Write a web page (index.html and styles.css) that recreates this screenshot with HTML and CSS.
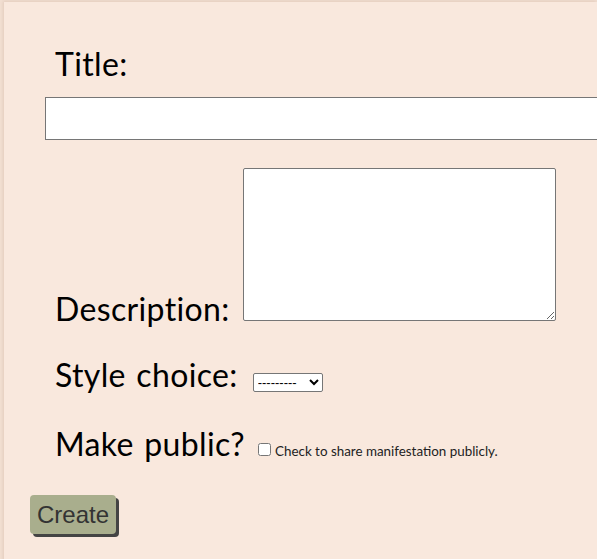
FILE: index.html
```html
<!DOCTYPE html>
<html>
<head>
<meta charset="utf-8">
<link rel="stylesheet" href="styles.css">
</head>
<body>
<div class="card">
  <form class="form">
    <div class="row row-title">
      <label class="label" for="title">Title:</label>
    </div>
    <input class="text-input" id="title" type="text">
    <div class="row row-desc">
      <label class="label" for="desc">Description:</label>
      <textarea class="textarea" id="desc"></textarea>
    </div>
    <div class="row row-style">
      <label class="label" for="style">Style choice:</label>
      <select class="select" id="style"><option>---------</option></select>
    </div>
    <div class="row row-public">
      <label class="label" for="pub">Make public?</label>
      <input class="checkbox" id="pub" type="checkbox">
      <span class="help">Check to share manifestation publicly.</span>
    </div>
    <button class="btn" type="button">Create</button>
  </form>
</div>
</body>
</html>
```
FILE: styles.css
```css
html, body {
  margin: 0;
  padding: 0;
  background: #f2dfd2;
  overflow: hidden;
}
.card {
  margin: 2px 0 0 4px;
  min-height: 600px;
  background: #f9e8dd;
  box-shadow: -1px -1px 3px rgba(200, 170, 150, 0.35);
}
.form {
  padding: 43px 0 0 41px;
  font-family: "Lato", "Open Sans", sans-serif;
  color: #000;
}
.row {
  display: flex;
  align-items: flex-end;
}
.label {
  font-size: 32px;
  line-height: 38px;
  padding-left: 10px;
  word-spacing: 2px;
  letter-spacing: 0.35px;
}
.text-input {
  display: block;
  box-sizing: border-box;
  width: 600px;
  height: 43px;
  margin-top: 14px;
  border: 1px solid #767676;
  background: #fff;
}
.row-desc {
  margin-top: 28px;
  align-items: flex-end;
}
.row-desc .label {
  position: relative;
  top: 7px;
}
.textarea {
  box-sizing: border-box;
  width: 313px;
  height: 153px;
  margin-left: 13px;
  border: 1px solid #767676;
  border-radius: 2px;
  background: #fff;
}
.row-style {
  margin-top: 35px;
  align-items: baseline;
}
.select {
  margin-left: 15px;
  width: 70px;
  height: 19px;
  font-size: 13px;
  font-family: "Liberation Sans", sans-serif;
  padding: 0;
  border: 1px solid #767676;
  border-radius: 2px;
  background: #fff;
}
.row-public {
  margin-top: 31px;
  align-items: baseline;
}
.checkbox {
  margin: 0 4px 0 13px;
  width: 13px;
  height: 13px;
}
.help {
  font-size: 13.4px;
  color: #222;
}
.btn {
  display: block;
  margin: 32px 0 0 -15px;
  width: 86px;
  height: 39px;
  background: #a9ae8d;
  border: none;
  border-radius: 4px;
  box-shadow: 3px 3px 0 #444;
  font-family: "Liberation Sans", Arial, sans-serif;
  font-size: 24px;
  color: #333;
  padding: 0;
}
```
